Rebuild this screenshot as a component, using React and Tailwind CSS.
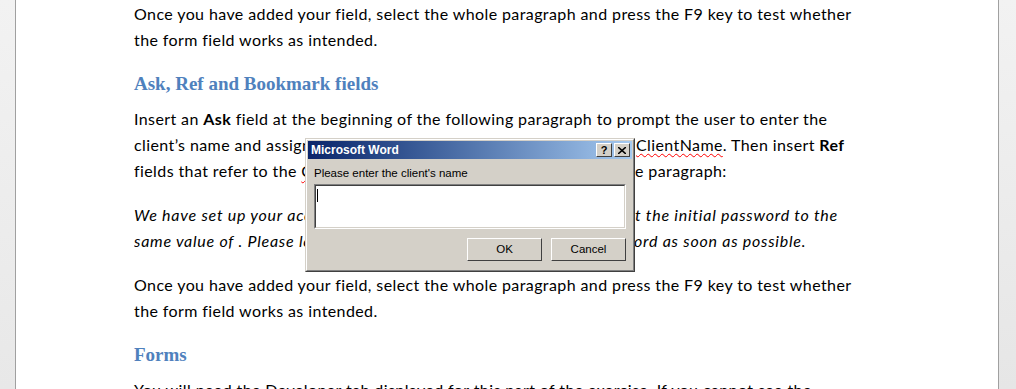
import React from "react";

const body = { fontFamily: "Lato, 'Open Sans', sans-serif" };
const head = { fontFamily: "'Liberation Serif', serif" };

function Hidden({ w, children }) {
  return (
    <span className="inline-block overflow-hidden whitespace-nowrap align-top" style={{ width: w }}>
      {children}
    </span>
  );
}

function TitleBtn({ children }) {
  return (
    <div className="w-[16px] h-[14px] bg-[#d4d0c8] border border-t-white border-l-white border-r-[#404040] border-b-[#404040] flex items-center justify-center text-[11px] font-bold leading-none text-black">
      {children}
    </div>
  );
}

function Btn({ children }) {
  return (
    <div className="w-[75px] h-[23px] bg-[#d4d0c8] border border-t-white border-l-white border-r-[#404040] border-b-[#404040] flex items-center justify-center text-[11.5px] text-black">
      {children}
    </div>
  );
}

const squig = "underline decoration-wavy decoration-[#ff0000] decoration-1 underline-offset-2";

export default function App() {
  return (
    <div className="w-[1016px] h-[389px] overflow-hidden flex bg-white">
      <div className="w-[16px] h-full bg-gradient-to-b from-[#f2f2f2] to-[#e8e8e8] border-r border-[#a0a0a0] shrink-0" />
      <div
        className="relative flex-1 bg-white pl-[118px] pt-[1px] text-[16px] tracking-[0.4px] leading-[26px] text-black [font-variant-ligatures:none]"
        style={body}
      >
        <div className="whitespace-nowrap mb-[18px]">
          <div>Once you have added your field, select the whole paragraph and press the F9 key to test whether</div>
          <div>the form field works as intended.</div>
        </div>
        <div className="whitespace-nowrap mb-[9px] text-[19px] tracking-normal font-bold text-[#4f81bd]" style={head}>
          Ask, Ref and Bookmark fields
        </div>
        <div className="whitespace-nowrap mb-[18px]">
          <div>
            Insert an <b>Ask</b> field at the beginning of the following paragraph to prompt the user to enter the
          </div>
          <div>
            <Hidden w={502}>client’s name and assign the response to a bookmark that is named </Hidden>
            <span className={squig}>ClientName</span>. Then insert <b>Ref</b>
          </div>
          <div>
            <Hidden w={501}>
              fields that refer to the <span className={squig}>ClientName</span> bookmark in appropriate places in th
            </Hidden>
            e paragraph:
          </div>
        </div>
        <div className="whitespace-nowrap mb-[18px] italic tracking-[0.75px]">
          <div>
            <Hidden w={501}>We have set up your account with the username and have se</Hidden>
            t the initial password to the
          </div>
          <div>
            <Hidden w={500}>same value of . Please log in and change your passw</Hidden>
            ord as soon as possible.
          </div>
        </div>
        <div className="whitespace-nowrap mb-[18px]">
          <div>Once you have added your field, select the whole paragraph and press the F9 key to test whether</div>
          <div>the form field works as intended.</div>
        </div>
        <div className="whitespace-nowrap mb-[9px] text-[19px] tracking-normal font-bold text-[#4f81bd]" style={head}>
          Forms
        </div>
        <div className="whitespace-nowrap">
          <div>You will need the Developer tab displayed for this part of the exercise. If you cannot see the</div>
        </div>

        {/* Dialog */}
        <div
          className="absolute left-[289px] top-[138px] w-[330px] h-[134px] bg-[#d4d0c8] border border-t-[#d4d0c8] border-l-[#d4d0c8] border-r-[#404040] border-b-[#404040] tracking-normal"
          style={{ fontFamily: "'Liberation Sans', Arial, sans-serif" }}
        >
          <div className="h-full border border-t-white border-l-white border-r-[#808080] border-b-[#808080] p-[1px] flex flex-col">
            <div className="h-[18px] bg-gradient-to-r from-[#0a246a] to-[#a6caf0] flex items-center justify-between pl-[3px] pr-[2px]">
              <span className="text-white text-[12px] font-bold leading-none">Microsoft Word</span>
              <div className="flex gap-[2px]">
                <TitleBtn>?</TitleBtn>
                <TitleBtn>
                  <svg width="8" height="7" viewBox="0 0 8 7">
                    <path d="M0 0 L8 7 M8 0 L0 7" stroke="black" strokeWidth="1.6" />
                  </svg>
                </TitleBtn>
              </div>
            </div>
            <div className="pl-[6px] pr-[6px] pt-[9px] text-[11.5px] leading-none text-black">
              <div className="h-[14px]">Please enter the client's name</div>
              <div className="mt-[2px] h-[45px] bg-white border border-t-[#808080] border-l-[#808080] border-r-white border-b-white">
                <div className="h-full border border-t-[#404040] border-l-[#404040] border-r-[#d4d0c8] border-b-[#d4d0c8] pl-[1px] pt-[3px]">
                  <div className="w-[1px] h-[13px] bg-black" />
                </div>
              </div>
              <div className="flex justify-end gap-[9px] mt-[9px]">
                <Btn>OK</Btn>
                <Btn>Cancel</Btn>
              </div>
            </div>
          </div>
        </div>
      </div>
      <div className="w-[18px] h-full bg-gradient-to-b from-[#f2f2f2] to-[#e6e6e6] border-l border-[#a0a0a0] shrink-0" />
    </div>
  );
}
